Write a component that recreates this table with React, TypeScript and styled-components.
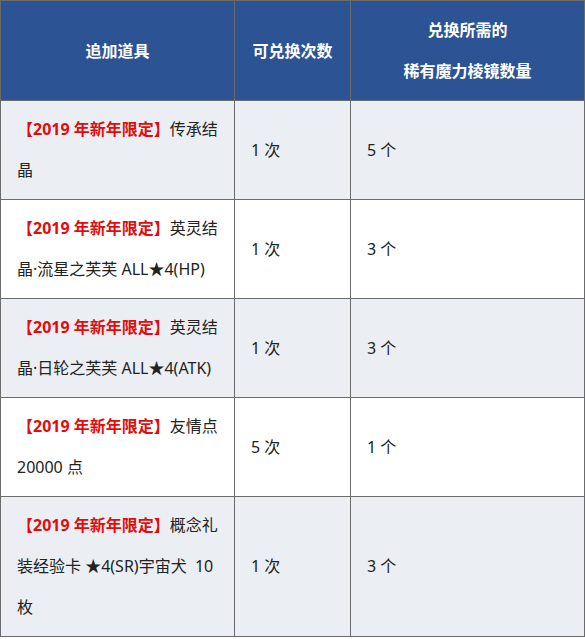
import { ReactElement } from 'react';
import styled, { createGlobalStyle } from 'styled-components';

const GlobalStyle = createGlobalStyle`
    body {
        margin: 0;
        background: #fff;
        font-family: 'Noto Sans', 'Noto Sans CJK SC', sans-serif;
    }
`;

type Row = { tag: string; name: string; times: string; cost: string };

const rows: Row[] = [
    { tag: '【2019 年新年限定】', name: '传承结晶', times: '1 次', cost: '5 个' },
    { tag: '【2019 年新年限定】', name: '英灵结晶·流星之芙芙 ALL★4(HP)', times: '1 次', cost: '3 个' },
    { tag: '【2019 年新年限定】', name: '英灵结晶·日轮之芙芙 ALL★4(ATK)', times: '1 次', cost: '3 个' },
    { tag: '【2019 年新年限定】', name: '友情点 20000 点', times: '5 次', cost: '1 个' },
    { tag: '【2019 年新年限定】', name: '概念礼装经验卡 ★4(SR)宇宙犬\u00a0 10 枚', times: '1 次', cost: '3 个' },
];

const App = (): ReactElement => (
    <>
        <GlobalStyle />
        <Table>
            <colgroup>
                <col style={{ width: 234 }} />
                <col style={{ width: 116 }} />
                <col />
            </colgroup>
            <thead>
                <tr>
                    <Head>追加道具</Head>
                    <Head>可兑换次数</Head>
                    <Head>
                        兑换所需的
                        <br />
                        稀有魔力棱镜数量
                    </Head>
                </tr>
            </thead>
            <tbody>
                {rows.map((r, i) => (
                    <BodyRow key={i} shaded={i % 2 === 0}>
                        <Cell>
                            <Tag>{r.tag}</Tag>
                            {r.name}
                        </Cell>
                        <Cell>{r.times}</Cell>
                        <Cell>{r.cost}</Cell>
                    </BodyRow>
                ))}
            </tbody>
        </Table>
    </>
);

const Table = styled.table`
    width: 585px;
    border-collapse: collapse;
    table-layout: fixed;
    font-size: 16px;
    line-height: 41px;
`;

const Head = styled.th`
    height: 82px;
    padding: 9px 14px 8px;
    background-color: #2c5394;
    color: #fff;
    font-weight: 700;
    text-align: center;
    border: 1px solid #6b6b6b;
`;

const BodyRow = styled.tr<{ shaded: boolean }>`
    background-color: ${(p) => (p.shaded ? '#ebeff3' : '#fff')};
`;

const Cell = styled.td`
    padding: 8px 14px 8px 16px;
    color: #222;
    vertical-align: middle;
    border: 1px solid #6b6b6b;
`;

const Tag = styled.span`
    color: #e30b0b;
    font-weight: 700;
`;

export default App;
